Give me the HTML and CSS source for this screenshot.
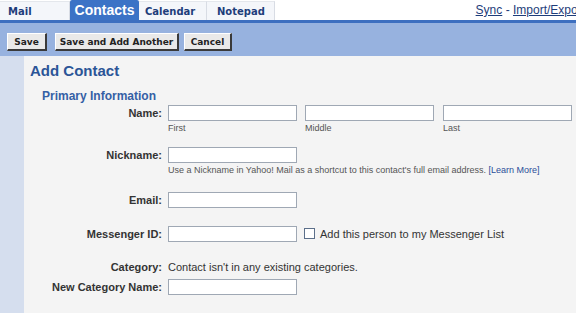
FILE: index.html
```html
<!DOCTYPE html>
<html>
<head>
<meta charset="utf-8">
<link rel="stylesheet" href="styles.css">
</head>
<body>
<div class="page">
  <div class="tabbar">
    <div class="tabs">
      <span class="tab tab-mail">Mail</span>
      <span class="tab tab-active">Contacts</span>
      <span class="tab tab-cal">Calendar</span>
      <span class="tab tab-note">Notepad</span>
    </div>
    <div class="toplinks"><a href="#">Sync</a> - <a href="#">Import/Export</a></div>
  </div>
  <div class="toolbar">
    <button class="btn btn-save">Save</button>
    <button class="btn btn-another">Save and Add Another</button>
    <button class="btn btn-cancel">Cancel</button>
  </div>
  <div class="body">
    <div class="side"></div>
    <div class="content">
      <h1 class="title">Add Contact</h1>
      <h2 class="section">Primary Information</h2>
      <div class="row row-name">
        <label class="lbl">Name:</label>
        <div class="names">
          <div class="namecol"><input class="field" type="text"><span class="sub">First</span></div>
          <div class="namecol namecol-mid"><input class="field" type="text"><span class="sub">Middle</span></div>
          <div class="namecol namecol-last"><input class="field" type="text"><span class="sub">Last</span></div>
        </div>
      </div>
      <div class="row row-nick">
        <label class="lbl">Nickname:</label>
        <div class="stack">
          <input class="field" type="text">
          <span class="help">Use a Nickname in Yahoo! Mail as a shortcut to this contact's full email address. <a href="#" class="learn">[Learn More]</a></span>
        </div>
      </div>
      <div class="row row-email">
        <label class="lbl">Email:</label>
        <input class="field" type="text">
      </div>
      <div class="row row-msgr">
        <label class="lbl">Messenger ID:</label>
        <input class="field" type="text">
        <span class="check"></span>
        <span class="checktext">Add this person to my Messenger List</span>
      </div>
      <div class="row row-cat">
        <label class="lbl">Category:</label>
        <span class="cattext">Contact isn't in any existing categories.</span>
      </div>
      <div class="row row-newcat">
        <label class="lbl">New Category Name:</label>
        <input class="field" type="text">
      </div>
    </div>
  </div>
</div>
</body>
</html>
```
FILE: styles.css
```css
html, body {
  margin: 0;
  padding: 0;
  background: #ffffff;
}
.page {
  width: 576px;
  height: 313px;
  overflow: hidden;
  font-family: "Liberation Sans", Arial, sans-serif;
}
.tabbar {
  height: 20px;
  display: flex;
  justify-content: space-between;
  background: #ffffff;
  white-space: nowrap;
}
.tabs {
  display: flex;
  align-items: flex-end;
  height: 20px;
}
.tab {
  font-family: "DejaVu Sans", Verdana, sans-serif;
  font-weight: bold;
  font-size: 10px;
  color: #1e3d7a;
  height: 19px;
  line-height: 19px;
  box-sizing: border-box;
  background: #f4f6fa;
  border-right: 1px solid #d8dce4;
  border-top: 1px solid #e4e7ec;
}
.tab-mail {
  width: 70px;
  padding-left: 8px;
}
.tab-active {
  width: 69px;
  height: 20px;
  line-height: 20px;
  background: #3b73c6;
  color: #ffffff;
  font-family: "Liberation Sans", Arial, sans-serif;
  font-size: 14px;
  text-align: center;
  border: none;
  border-radius: 2px 2px 0 0;
}
.tab-cal {
  width: 68px;
  padding-left: 6px;
}
.tab-note {
  width: 68px;
  padding-left: 10px;
}
.toplinks {
  font-family: "Liberation Sans", Arial, sans-serif;
  font-size: 12px;
  color: #1e3d7a;
  line-height: 20px;
  margin-right: -9px;
}
.toplinks a {
  color: #1e3d7a;
  text-decoration: underline;
}
.toolbar {
  border-top: 3px solid #3d6fc0;
  background: #97b2df;
  display: flex;
  align-items: flex-start;
  padding: 10px 0 0 7px;
  box-sizing: border-box;
  height: 36px;
}
.btn {
  font-family: "DejaVu Sans", Verdana, sans-serif;
  font-weight: bold;
  font-size: 9px;
  color: #222;
  background: #e9e9e9;
  height: 18px;
  padding: 0;
  border-top: 1px solid #ffffff;
  border-left: 1px solid #ffffff;
  border-right: 2px solid #3a3a3a;
  border-bottom: 2px solid #3a3a3a;
  box-sizing: border-box;
  margin: 0;
}
.btn-save { width: 40px; }
.btn-another { width: 124px; margin-left: 8px; }
.btn-cancel { width: 48px; margin-left: 5px; }
.body {
  display: flex;
  height: 257px;
}
.side {
  width: 24px;
  background: #d5deee;
}
.content {
  flex: 1;
  background: #f4f4f4;
}
.title {
  margin: 6px 0 0 6px;
  font-size: 15px;
  line-height: 18px;
  font-weight: bold;
  color: #2b5597;
}
.section {
  margin: 9px 0 0 18px;
  font-size: 12px;
  line-height: 15px;
  font-weight: bold;
  color: #3560a5;
}
.row {
  display: flex;
  align-items: flex-start;
}
.lbl {
  width: 144px;
  padding-right: 6px;
  box-sizing: border-box;
  text-align: right;
  font-size: 11px;
  font-weight: bold;
  color: #333333;
  line-height: 16px;
  flex-shrink: 0;
}
.field {
  width: 129px;
  height: 16px;
  box-sizing: border-box;
  border: 1px solid #9fa8b4;
  background: #ffffff;
  margin: 0;
  padding: 0;
}
.names {
  display: flex;
}
.namecol {
  display: flex;
  flex-direction: column;
}
.namecol-mid { margin-left: 8px; }
.namecol-last { margin-left: 9px; }
.sub, .help {
  font-size: 9px;
  color: #555555;
  line-height: 13px;
  margin-top: 1px;
}
.stack {
  display: flex;
  flex-direction: column;
}
.help {
  white-space: nowrap;
}
.learn {
  color: #2b4f9a;
  text-decoration: none;
}
.row-name { margin-top: 1px; }
.row-nick { margin-top: 12px; }
.row-email { margin-top: 15px; }
.row-msgr { margin-top: 18px; }
.check {
  width: 11px;
  height: 11px;
  box-sizing: border-box;
  border: 1px solid #5c6f8a;
  background: #ffffff;
  margin: 2px 0 0 7px;
}
.checktext {
  font-size: 11px;
  color: #333333;
  line-height: 16px;
  margin-left: 5px;
}
.row-cat { margin-top: 17px; }
.cattext {
  font-size: 11px;
  color: #333333;
  line-height: 16px;
}
.row-newcat { margin-top: 4px; }
```
